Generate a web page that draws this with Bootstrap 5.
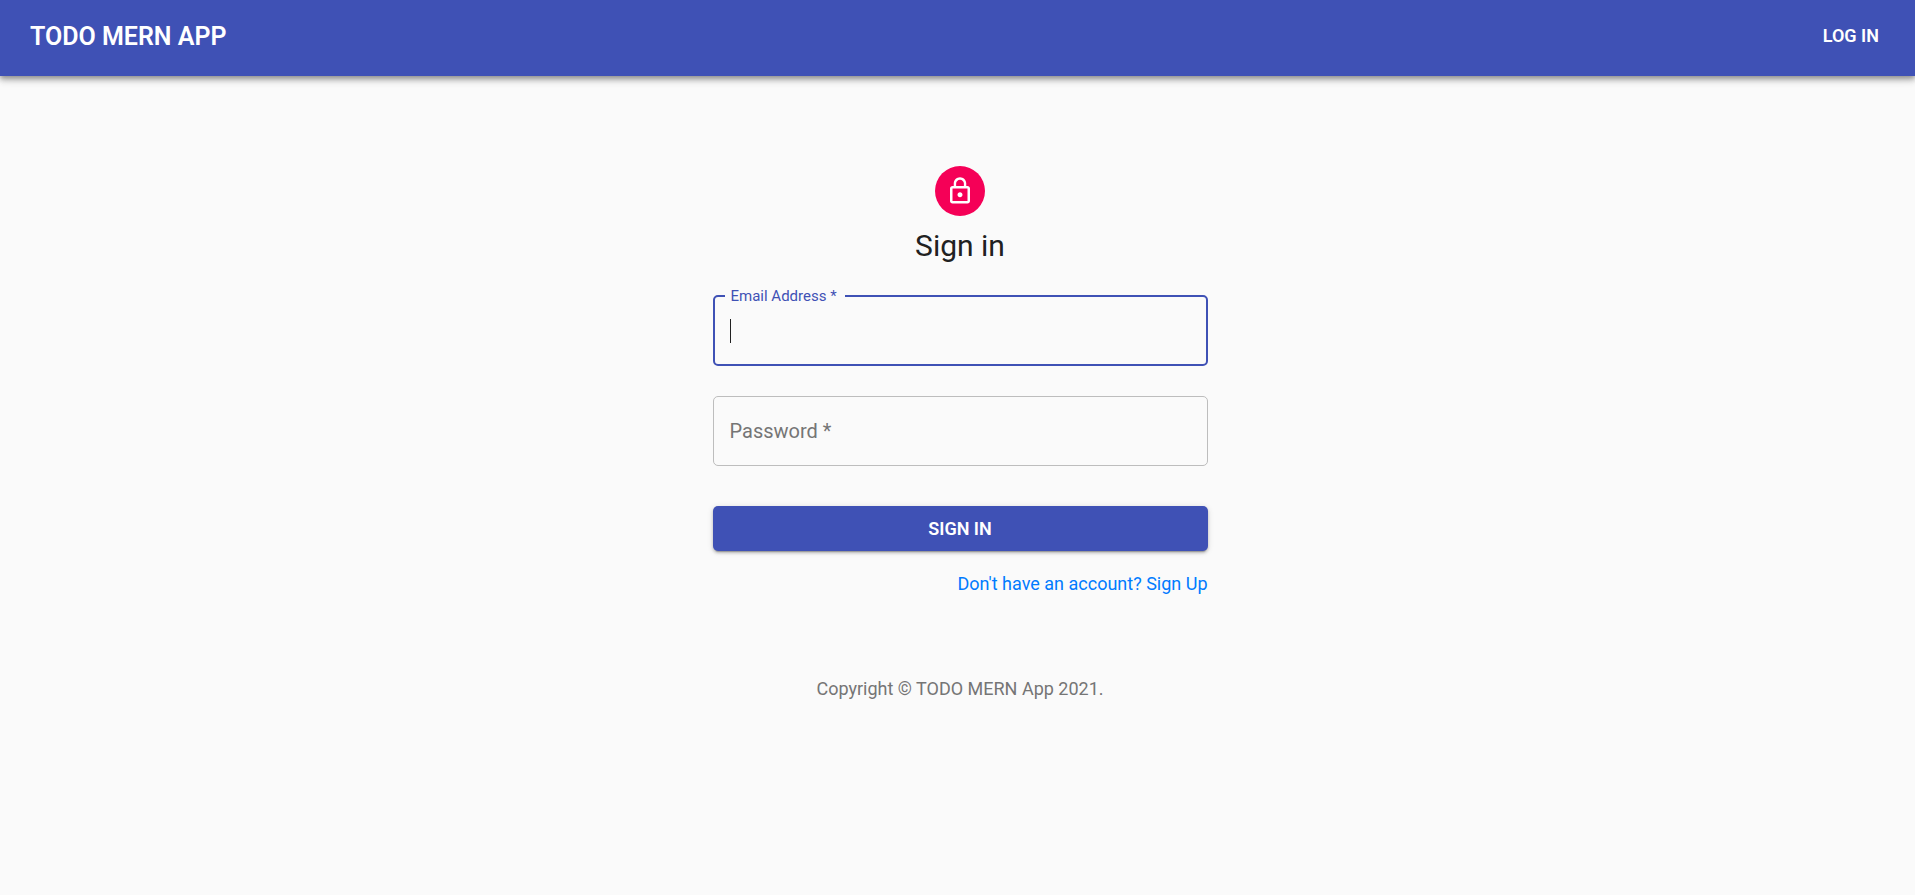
<!DOCTYPE html>
<html lang="en">
<head>
<meta charset="utf-8">
<meta name="viewport" content="width=device-width, initial-scale=1">
<title>TODO MERN App</title>
<link href="https://cdn.jsdelivr.net/npm/bootstrap@5.3.0/dist/css/bootstrap.min.css" rel="stylesheet">
<style>
  :root { --indigo: #3f51b5; --page: #fafafa; --muted: #757575; }
  body { font-family: Roboto, sans-serif; background: var(--page); color: #212121; font-size: 18px; line-height: 26px; }
  .app-bar { background: var(--indigo); min-height: 76px; padding: 0 30px 2px;
    box-shadow: 0 2px 5px rgba(0,0,0,.3), 0 5px 6px rgba(0,0,0,.14), 0 1px 12px rgba(0,0,0,.12); }
  .app-bar .navbar-brand { font-size: 25px; line-height: 40px; font-weight: 600; }
  .btn-app { --bs-btn-color: #fff; --bs-btn-hover-color: #fff; --bs-btn-active-color: #fff;
    --bs-btn-font-size: 18px; --bs-btn-font-weight: 600; --bs-btn-border-width: 0; line-height: 31px; }
  .btn-flat { padding: 0 6px 4px; }
  .btn-solid { --bs-btn-bg: var(--indigo); --bs-btn-hover-bg: #303f9f; --bs-btn-active-bg: #303f9f;
    --bs-btn-border-radius: 5px; padding: 7px 20px; margin: 40px 0 20px;
    box-shadow: 0 3px 1px -2px rgba(0,0,0,.2), 0 2px 3px rgba(0,0,0,.2), 0 1px 6px rgba(0,0,0,.12); }
  .page-main { padding: 90px 0 0 5px; }
  .sign-panel { max-width: 495px; }
  .lock-avatar { width: 50px; height: 50px; background: #f50057; }
  h1 { font-size: 30px; line-height: 40px; font-weight: 400; margin: 10px 0 29px; }
  .field-box { margin-bottom: 30px; }
  .field-box .form-control { height: 70px; padding: 0 17px; font-size: 20px; background-color: transparent;
    border: 1px solid #bdbdbd; border-radius: 5px; box-shadow: none; }
  .field-box label { left: 17px; top: 20px; font-size: 20px; line-height: 30px; color: var(--muted); pointer-events: none; }
  .field-box.is-active .form-control { height: 71px; border: 2px solid var(--indigo); caret-color: transparent; }
  .field-box.is-active label { left: 12px; top: -10px; padding: 0 8px 0 6px; font-size: 15px; line-height: 22px; color: var(--indigo); background: var(--page); }
  .text-caret { left: 17px; top: 24px; width: 1px; height: 24px; background: #212121; }
  .signup-link { color: #007bff; }
  footer { color: var(--muted); margin-top: 79px; }
</style>
</head>
<body>
<header class="navbar app-bar">
  <a class="navbar-brand text-white p-0 m-0" href="#">TODO MERN APP</a>
  <button type="button" class="btn btn-app btn-flat">LOG IN</button>
</header>

<main class="page-main">
  <div class="sign-panel mx-auto d-flex flex-column align-items-center">
    <div class="lock-avatar rounded-circle d-flex align-items-center justify-content-center">
      <svg width="30" height="30" viewBox="0 0 24 24" fill="#fff" aria-hidden="true"><path d="M12 17c1.1 0 2-.9 2-2s-.9-2-2-2-2 .9-2 2 .9 2 2 2zm6-9h-1V6c0-2.760-2.240-5-5-5S7 3.240 7 6v2H6c-1.100 0-2 .9-2 2v10c0 1.100.9 2 2 2h12c1.100 0 2-.9 2-2V10c0-1.100-.9-2-2-2zM8.900 6c0-1.710 1.390-3.100 3.100-3.100s3.100 1.390 3.100 3.100v2H8.900V6zM18 20H6V10h12v10z"/></svg>
    </div>
    <h1>Sign in</h1>
    <form class="w-100">
      <div class="field-box is-active position-relative">
        <input type="email" class="form-control" id="email" autocomplete="off" required>
        <label for="email" class="position-absolute">Email Address *</label>
        <span class="text-caret position-absolute"></span>
      </div>
      <div class="field-box position-relative">
        <input type="password" class="form-control" id="password" autocomplete="off" required>
        <label for="password" class="position-absolute">Password *</label>
      </div>
      <button type="submit" class="btn btn-app btn-solid w-100 d-block">SIGN IN</button>
      <div class="text-end"><a class="signup-link text-decoration-none" href="#">Don't have an account? Sign Up</a></div>
    </form>
    <footer>Copyright © TODO MERN App 2021.</footer>
  </div>
</main>
<script src="https://cdn.jsdelivr.net/npm/bootstrap@5.3.0/dist/js/bootstrap.bundle.min.js"></script>
</body>
</html>
